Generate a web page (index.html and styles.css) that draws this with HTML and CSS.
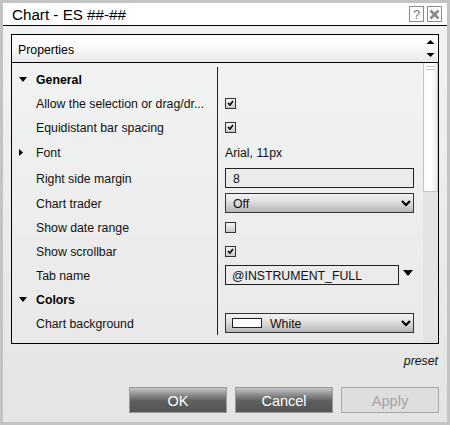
FILE: index.html
```html
<!DOCTYPE html>
<html>
<head>
<meta charset="utf-8">
<title>Chart - ES ##-##</title>
<link rel="stylesheet" href="styles.css">
</head>
<body>
<div class="window">
  <div class="titlebar">
    <span class="title">Chart - ES ##-##</span>
    <span class="tbtn help">?</span>
    <span class="tbtn close"><svg width="11" height="11" viewBox="0 0 11 11"><path d="M1.5 1.5 L9.5 9.5 M9.5 1.5 L1.5 9.5" stroke="#8a8a8a" stroke-width="2.6" fill="none"/></svg></span>
  </div>
  <div class="body">
    <div class="panel">
      <div class="phead">
        <span class="ptitle">Properties</span>
        <span class="arrows">
          <svg width="9" height="6" viewBox="0 0 9 6"><path d="M0.5 5 L4.5 1 L8.5 5 Z" fill="#000"/></svg>
          <svg width="9" height="6" viewBox="0 0 9 6"><path d="M0.5 1 L4.5 5 L8.5 1 Z" fill="#000"/></svg>
        </span>
      </div>
      <div class="pcontent">
        <div class="rows">
          <div class="row">
            <div class="lab"><span class="tw"><svg width="8" height="5" viewBox="0 0 8 5"><path d="M0 0 L8 0 L4 5 Z" fill="#000"/></svg></span><b class="txt">General</b></div>
            <div class="val"></div>
          </div>
          <div class="row">
            <div class="lab"><span class="tw"></span><span class="txt">Allow the selection or drag/dr...</span></div>
            <div class="val"><span class="cb on"><svg width="7" height="6" viewBox="0 0 7 6"><path d="M1 3 L3 5 L6 1" stroke="#000" stroke-width="1.6" fill="none"/></svg></span></div>
          </div>
          <div class="row">
            <div class="lab"><span class="tw"></span><span class="txt">Equidistant bar spacing</span></div>
            <div class="val"><span class="cb on"><svg width="7" height="6" viewBox="0 0 7 6"><path d="M1 3 L3 5 L6 1" stroke="#000" stroke-width="1.6" fill="none"/></svg></span></div>
          </div>
          <div class="row tall">
            <div class="lab"><span class="tw"><svg width="4" height="7" viewBox="0 0 4 7"><path d="M0 0 L4 3.5 L0 7 Z" fill="#000"/></svg></span><span class="txt">Font</span></div>
            <div class="val"><span class="txt">Arial, 11px</span></div>
          </div>
          <div class="row tall">
            <div class="lab"><span class="tw"></span><span class="txt">Right side margin</span></div>
            <div class="val"><span class="field wide">8</span></div>
          </div>
          <div class="row">
            <div class="lab"><span class="tw"></span><span class="txt">Chart trader</span></div>
            <div class="val"><span class="select wide"><span class="stext">Off</span><svg class="chev" width="10" height="7" viewBox="0 0 10 7"><path d="M1 1 L5 5 L9 1" stroke="#000" stroke-width="2.2" fill="none"/></svg></span></div>
          </div>
          <div class="row">
            <div class="lab"><span class="tw"></span><span class="txt">Show date range</span></div>
            <div class="val"><span class="cb"></span></div>
          </div>
          <div class="row">
            <div class="lab"><span class="tw"></span><span class="txt">Show scrollbar</span></div>
            <div class="val"><span class="cb on"><svg width="7" height="6" viewBox="0 0 7 6"><path d="M1 3 L3 5 L6 1" stroke="#000" stroke-width="1.6" fill="none"/></svg></span></div>
          </div>
          <div class="row">
            <div class="lab"><span class="tw"></span><span class="txt">Tab name</span></div>
            <div class="val"><span class="field narrow">@INSTRUMENT_FULL</span><svg class="drop" width="10" height="6" viewBox="0 0 10 6"><path d="M0 0 L10 0 L5 6 Z" fill="#000"/></svg></div>
          </div>
          <div class="row">
            <div class="lab"><span class="tw"><svg width="8" height="5" viewBox="0 0 8 5"><path d="M0 0 L8 0 L4 5 Z" fill="#000"/></svg></span><b class="txt">Colors</b></div>
            <div class="val"></div>
          </div>
          <div class="row">
            <div class="lab"><span class="tw"></span><span class="txt">Chart background</span></div>
            <div class="val"><span class="select wide"><span class="swatch"></span><span class="stext">White</span><svg class="chev" width="10" height="7" viewBox="0 0 10 7"><path d="M1 1 L5 5 L9 1" stroke="#000" stroke-width="2.2" fill="none"/></svg></span></div>
          </div>
        </div>
        <div class="scrollbar"><div class="thumb"><span class="grip"></span><span class="grip"></span></div></div>
      </div>
    </div>
    <div class="preset">preset</div>
    <div class="buttons">
      <span class="btn dark">OK</span>
      <span class="btn dark">Cancel</span>
      <span class="btn disabled">Apply</span>
    </div>
  </div>
</div>
</body>
</html>
```

FILE: styles.css
```css
html, body {
  margin: 0;
  padding: 0;
}
body {
  font-family: "Liberation Sans", Arial, sans-serif;
  font-size: 12.3px;
  color: #111;
  background: #fff;
}
.window {
  width: 450px;
  height: 425px;
  box-sizing: border-box;
  border: 3px solid #c3c3c3;
  display: flex;
  flex-direction: column;
  background: linear-gradient(#f2f3f3, #e4e4e4);
}
.titlebar {
  height: 22px;
  background: #fff;
  border-bottom: 1px solid #000;
  display: flex;
  align-items: center;
  padding: 0 5px 0 9px;
  gap: 3px;
}
.title {
  flex: 1;
  font-size: 15.2px;
  color: #000;
  padding-top: 1px;
}
.tbtn {
  width: 13px;
  height: 14px;
  border: 1px solid #8c8c8c;
  background: #fff;
  display: flex;
  align-items: center;
  justify-content: center;
  font-size: 13px;
  color: #777;
  line-height: 1;
}
.body {
  flex: 1;
  padding: 8px 8px 9px 8px;
  display: flex;
  flex-direction: column;
}
.panel {
  height: 310px;
  box-sizing: border-box;
  border: 1px solid #000;
  display: flex;
  flex-direction: column;
}
.phead {
  height: 27px;
  border-bottom: 1px solid #000;
  background: linear-gradient(#ffffff 0%, #fbfbfb 40%, #e9e9e9 100%);
  display: flex;
  align-items: center;
  padding: 0 3px 0 6px;
}
.ptitle {
  flex: 1;
  color: #000;
  padding-top: 2px;
}
.arrows {
  display: flex;
  flex-direction: column;
  gap: 7px;
}
.arrows svg {
  display: block;
}
.pcontent {
  flex: 1;
  display: flex;
  background: linear-gradient(#f1f2f2, #e9e9e9);
}
.rows {
  flex: 1;
  padding-top: 4px;
}
.row {
  display: flex;
  height: 24px;
}
.row.tall {
  height: 26px;
}
.lab {
  width: 205px;
  display: flex;
  align-items: center;
  white-space: nowrap;
}
.txt {
  padding-top: 2px;
}
.lab b {
  font-weight: bold;
  color: #000;
}
.tw {
  width: 24px;
  padding-left: 7px;
  box-sizing: border-box;
  display: flex;
  align-items: center;
}
.tw svg {
  display: block;
}
.val {
  flex: 1;
  border-left: 1px solid #222;
  padding-left: 7px;
  display: flex;
  align-items: center;
  color: #111;
}
.cb {
  width: 11px;
  height: 11px;
  box-sizing: border-box;
  border: 1px solid #333;
  background: linear-gradient(#f4f4f4, #c9c9c9);
  display: flex;
  align-items: center;
  justify-content: center;
}
.cb svg {
  display: block;
}
.field {
  height: 20px;
  box-sizing: border-box;
  border: 1px solid #222;
  background: #ebebeb;
  display: flex;
  align-items: center;
  padding-left: 7px;
  padding-top: 1px;
  color: #111;
}
.field.wide {
  width: 189px;
}
.field.narrow {
  width: 174px;
  padding-left: 6px;
}
.drop {
  margin-left: 4px;
  display: block;
  margin-top: -5px;
}
.select {
  height: 20px;
  box-sizing: border-box;
  border: 1px solid #333;
  background: linear-gradient(#f3f3f3 0%, #dedede 45%, #b6b6b6 100%);
  display: flex;
  align-items: center;
  padding: 0 2px 0 5px;
}
.select.wide {
  width: 189px;
}
.stext {
  flex: 1;
  color: #111;
  padding-left: 2px;
  padding-top: 1px;
}
.chev {
  display: block;
}
.swatch {
  width: 28px;
  height: 8px;
  border: 1px solid #222;
  background: #fff;
  margin-right: 6px;
  margin-left: 1px;
}
.scrollbar {
  width: 15px;
  background: #e3e3e3;
}
.thumb {
  height: 129px;
  box-sizing: border-box;
  border: 1px solid #c4c4c4;
  border-top: none;
  background: linear-gradient(90deg, #fafafa 0%, #ffffff 50%, #ececec 100%);
  display: flex;
  flex-direction: column;
  align-items: center;
  padding-top: 3px;
  gap: 2px;
}
.grip {
  width: 9px;
  height: 1px;
  background: #c8c8c8;
}
.preset {
  margin-top: 10px;
  height: 14px;
  line-height: 14px;
  text-align: right;
  font-style: italic;
  color: #111;
  padding-right: 1px;
}
.buttons {
  margin-top: 19px;
  display: flex;
  justify-content: flex-end;
  gap: 8px;
}
.btn {
  width: 98px;
  height: 26px;
  box-sizing: border-box;
  display: flex;
  align-items: center;
  justify-content: center;
  font-size: 14.5px;
  padding-top: 1px;
}
.btn.dark {
  border: 1px solid #9a9a9a;
  background: linear-gradient(#c6c6c6 0%, #8a8a8a 30%, #5e5e5e 55%, #555 100%);
  color: #fff;
}
.btn.disabled {
  border: 1px solid #a8a8a8;
  background: #dedede;
  color: #a4a4a4;
}
```
